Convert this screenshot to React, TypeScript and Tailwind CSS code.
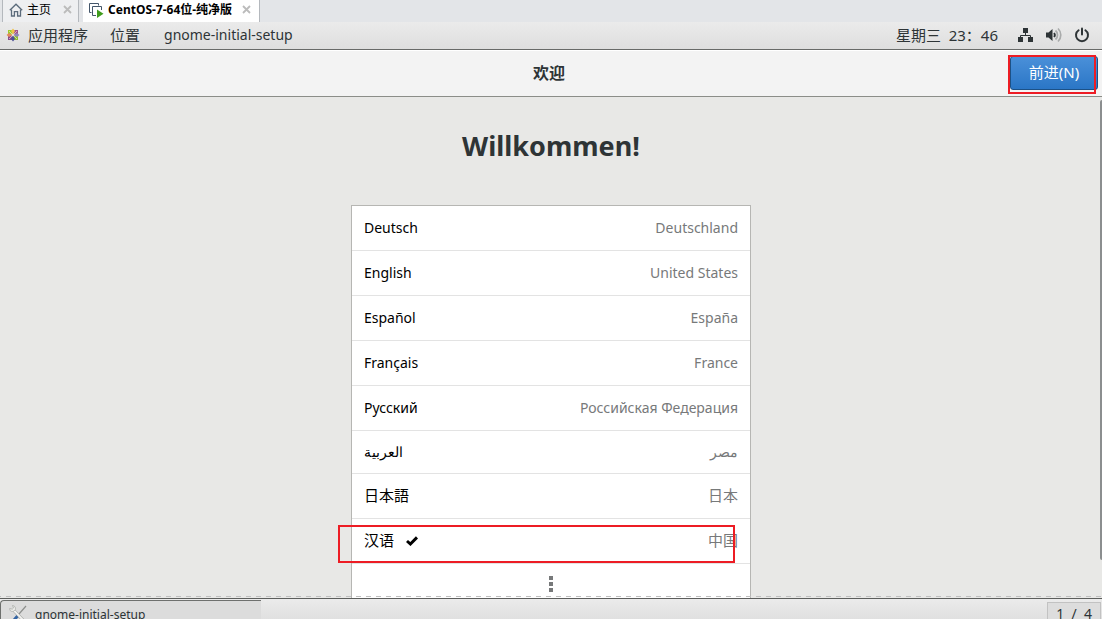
import type { ReactNode } from "react";

const languages = [
  { name: "Deutsch", country: "Deutschland", lang: "de" },
  { name: "English", country: "United States", lang: "en" },
  { name: "Español", country: "España", lang: "es" },
  { name: "Français", country: "France", lang: "fr" },
  { name: "Русский", country: "Российская Федерация", lang: "ru" },
  { name: "العربية", country: "مصر", lang: "ar" },
  { name: "日本語", country: "日本", lang: "ja", cjk: true },
  { name: "汉语", country: "中国", lang: "zh-CN", cjk: true, selected: true },
];

function HomeIcon() {
  return (
    <svg width="14" height="14" viewBox="0 0 14 14" fill="none" stroke="#5b6b7b" strokeWidth="1.3" className="shrink-0">
      <path d="M0.8 7.2 L7 1.2 L13.2 7.2" />
      <path d="M2.5 6.5 V13 H5.4 V8.6 H8.6 V13 H11.5 V6.5" />
    </svg>
  );
}

function MachineIcon() {
  return (
    <svg width="15" height="15" viewBox="0 0 15 15" fill="none" className="shrink-0">
      <path d="M2.5 9.5 H0.5 V0.5 H9.5 V2.5" stroke="#44566a" />
      <path d="M7 12.5 H3.5 V3.5 H12.5 V7" stroke="#44566a" />
      <path d="M8 6.5 L14.5 10.8 L8 15 Z" fill="#3f9c1c" />
    </svg>
  );
}

function CloseIcon() {
  return (
    <svg width="9" height="9" viewBox="0 0 9 9" stroke="#bcbcbc" strokeWidth="1.8">
      <path d="M1 1 L8 8 M8 1 L1 8" />
    </svg>
  );
}

// CentOS pinwheel
function CentosIcon() {
  return (
    <svg width="14" height="14" viewBox="0 0 14 14" className="shrink-0">
      <path d="M2 2 H6.5 V6.5 H2 Z" fill="#9ccd2a" />
      <path d="M7.5 2 H12 V6.5 H7.5 Z" fill="#a14f8c" />
      <path d="M7.5 7.5 H12 V12 H7.5 Z" fill="#8fbf2e" />
      <path d="M2 7.5 H6.5 V12 H2 Z" fill="#8a4a8c" />
      <path d="M5 3 L7 0.5 L9 3 L7 6.5 Z" fill="#efc24a" />
      <path d="M11 5 L13.5 7 L11 9 L7.5 7 Z" fill="#8f86b8" />
      <path d="M5 11 L7 13.5 L9 11 L7 7.5 Z" fill="#4b4f96" />
      <path d="M3 5 L0.5 7 L3 9 L6.5 7 Z" fill="#e58a5c" />
      <path d="M3 3 L11 11 M11 3 L3 11" stroke="#f4efe8" strokeWidth="0.6" />
    </svg>
  );
}

function NetworkIcon() {
  return (
    <svg width="16" height="16" viewBox="0 0 16 16" fill="#2e3436">
      <path d="M5 1 H10 V6 H5 Z M0 10 H5 V15 H0 Z M10 10 H15 V15 H10 Z" />
      <path d="M7.5 6 V8.5 M2.5 11 V8.5 H12.5 V11" fill="none" stroke="#2e3436" />
    </svg>
  );
}

function VolumeIcon() {
  return (
    <svg width="16" height="16" viewBox="0 0 16 16" fill="none">
      <path d="M0 5.5 H2.5 L6.5 2 V14 L2.5 10.5 H0 Z" fill="#2e3436" />
      <path d="M8 6 A3 3 0 0 1 8 10" stroke="#2e3436" strokeWidth="1.8" />
      <path d="M9.5 3.5 A6 6 0 0 1 9.5 12.5" stroke="#a9abab" strokeWidth="1.7" />
      <path d="M12 1.5 A9 9 0 0 1 12 14.5" stroke="#a9abab" strokeWidth="1.7" />
    </svg>
  );
}

function PowerIcon() {
  return (
    <svg width="16" height="16" viewBox="0 0 16 16" fill="none" stroke="#2e3436" strokeWidth="2" strokeLinecap="round">
      <path d="M4.6 3.2 A6 6 0 1 0 11.4 3.2" />
      <path d="M8 1.5 V7.5" />
    </svg>
  );
}

function CheckIcon() {
  return (
    <svg width="12" height="10" viewBox="0 0 12 10" fill="none" stroke="#000" strokeWidth="3">
      <path d="M1 5 L4.4 8 L11 1.4" />
    </svg>
  );
}

function ToolsIcon() {
  return (
    <svg width="18" height="18" viewBox="0 0 18 18" fill="none" className="shrink-0">
      <path d="M17 1 L10 9" stroke="#8c8f8c" strokeWidth="1.2" />
      <path d="M9.5 10 L5 15" stroke="#3465a4" strokeWidth="3" />
      <path d="M3.5 4 L14 15" stroke="#9a9c99" strokeWidth="3" />
      <path d="M3.5 4 L14 15" stroke="#f2f2f0" strokeWidth="2" />
      <path d="M3.5 0.5 L4.5 3 L3.3 4.2 L0.7 3.5 C0.5 6 3 7.2 5 6 L6.3 4.6 C7 2.5 5.7 0.7 3.5 0.5 Z" fill="#eeeeec" stroke="#a5a7a3" strokeWidth="0.7" />
    </svg>
  );
}

function Tab({ icon, title, active }: { icon: ReactNode; title: string; active?: boolean }) {
  return (
    <div
      className={
        active
          ? "flex items-center gap-2 border-r border-[#b4b8bd] bg-white px-1.5"
          : "mr-1 flex items-center gap-2.5 border-x border-[#b4b8bd] bg-[#eeeff1] pr-1 pl-1.5"
      }
    >
      <button role="tab" aria-selected={!!active} className="flex items-center gap-1 pb-0.5 whitespace-nowrap">
        {icon}
        <span className={active ? "text-xs font-bold" : "text-xs"}>{title}</span>
      </button>
      <button aria-label="关闭" className="px-0.5 pb-1">
        <CloseIcon />
      </button>
    </div>
  );
}

export default function App() {
  return (
    <div className="flex h-screen flex-col overflow-hidden bg-[#e8e8e6] font-['Noto_Sans','Noto_Sans_CJK_SC',sans-serif] text-sm text-[#2e3436]">
      <div role="tablist" className="flex h-[22px] shrink-0 bg-[#e3e5e8] pl-0.5 text-black">
        <Tab icon={<HomeIcon />} title="主页" />
        <Tab icon={<MachineIcon />} title="CentOS-7-64位-纯净版" active />
      </div>

      <nav className="flex h-7 shrink-0 items-center justify-between border-b border-[#686a68] bg-linear-to-b from-[#ebebeb] to-[#dedede] px-1.5">
        <div className="flex items-center">
          <button className="flex items-center gap-2 text-[15px]">
            <CentosIcon />
            应用程序
          </button>
          <button className="mr-6 ml-[22px] text-[15px]">位置</button>
          <button>gnome-initial-setup</button>
        </div>
        <div className="flex items-center gap-3 pr-1.5">
          <button className="mr-2 text-[15px] whitespace-pre">星期三  23：46</button>
          <button aria-label="网络"><NetworkIcon /></button>
          <button aria-label="音量"><VolumeIcon /></button>
          <button aria-label="电源"><PowerIcon /></button>
        </div>
      </nav>

      <header className="grid h-[47px] shrink-0 grid-cols-[1fr_auto_1fr] items-center border-b border-[#8b8d88] bg-[#f3f3f3] pr-1 shadow-[inset_0_1px_#ffffff]">
        <h2 className="col-start-2 text-base font-bold">欢迎</h2>
        <div className="relative justify-self-end">
          <button className="h-[34px] min-w-[88px] rounded-[3px] border border-[#1c5187] bg-linear-to-b from-[#4a90d9] to-[#2a76c6] px-4 text-[15px] text-white">
            前进(N)
          </button>
          <div className="pointer-events-none absolute -top-px right-0.5 -bottom-1 -left-0.5 border-2 border-[#ed1c24]" />
        </div>
      </header>

      <main className="relative min-h-0 flex-1 overflow-hidden">
        <div className="flex flex-col items-center pt-7">
          <h1 className="text-[27px] leading-[42px] font-bold">Willkommen!</h1>
          <ul className="mt-[38px] w-[400px] border border-[#b6b6b3] bg-white">
            {languages.map((l) => (
              <li key={l.lang} className={l.cjk ? "relative border-b border-[#e3e3e3] text-[15px]" : "border-b border-[#e3e3e3]"}>
                <button
                  className={
                    l.lang === "ar"
                      ? "flex h-[42px] w-full items-center px-3"
                      : "flex h-11 w-full items-center px-3"
                  }
                >
                  <span lang={l.lang} className="text-black">{l.name}</span>
                  {l.selected && <span className="ml-3"><CheckIcon /></span>}
                  <span lang={l.lang} className="ml-auto text-[#77797a]">{l.country}</span>
                </button>
                {l.selected && (
                  <div className="pointer-events-none absolute top-1.5 right-[15px] bottom-0 -left-3.5 border-2 border-[#ed1c24]" />
                )}
              </li>
            ))}
            <li>
              <button aria-label="更多" className="flex h-11 w-full flex-col items-center gap-0.5 pt-3">
                <i className="size-1 bg-[#77797a]" />
                <i className="size-1 bg-[#77797a]" />
                <i className="size-1 bg-[#77797a]" />
              </button>
            </li>
          </ul>
        </div>
        <div className="absolute top-[3px] right-0 bottom-[38px] w-0.5 rounded-l-sm bg-[#8b8e8f]" />
        <div className="absolute inset-x-0 bottom-px h-px bg-[repeating-linear-gradient(90deg,#bfbfbf_0_1px,transparent_1px_6px,#bfbfbf_6px_10px)]" />
      </main>

      <footer className="flex h-[21px] shrink-0 items-start justify-between overflow-hidden border-t border-[#5c5e5c] bg-linear-to-b from-[#ebebeb] to-[#e0e0e0]">
        <button className="mt-px flex h-8 w-[261px] items-start gap-2 rounded-tl-sm border-t border-l border-[#6e706e] bg-[#dcdcdc] pt-1 pl-2">
          <ToolsIcon />
          <span className="text-xs leading-5">gnome-initial-setup</span>
        </button>
        <button className="mt-[3px] mr-px flex h-8 items-start border border-[#c2c2c2] bg-[#dddddd] px-2 pt-px leading-5 whitespace-pre">1  /  4</button>
      </footer>
    </div>
  );
}
